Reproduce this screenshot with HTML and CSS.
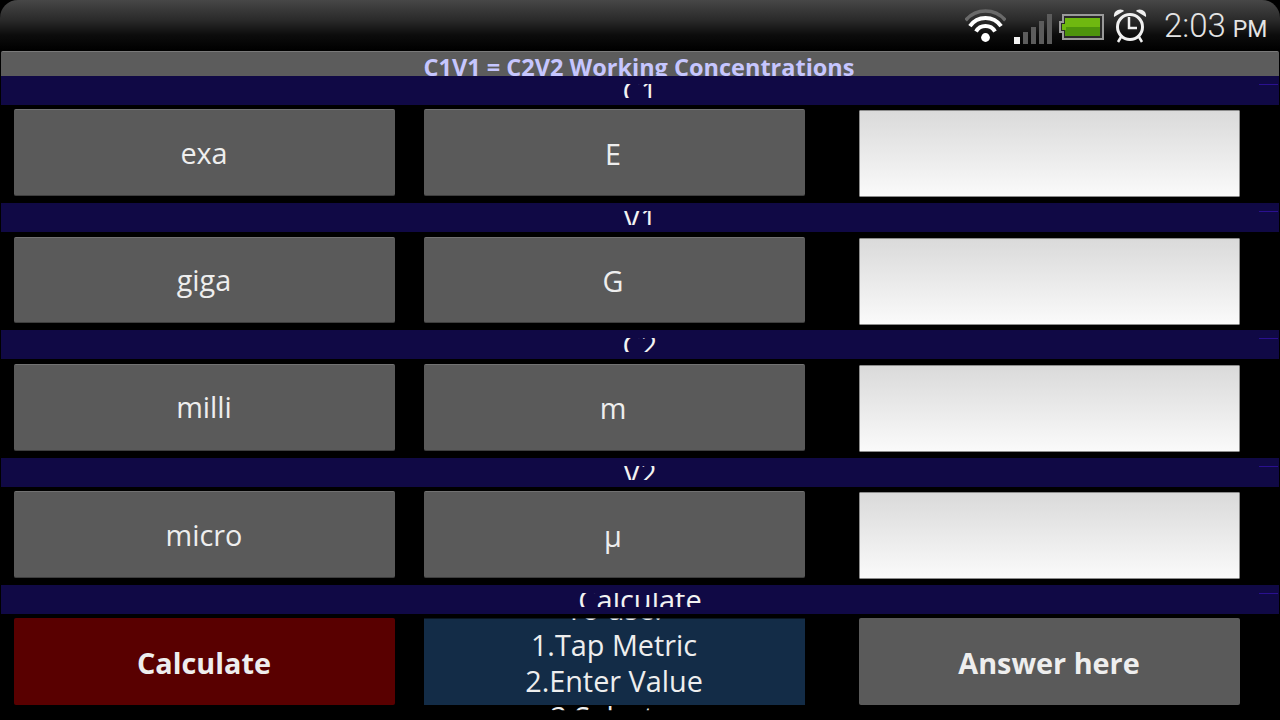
FILE: index.html
```html
<!DOCTYPE html>
<html lang="en">
<head>
<meta charset="utf-8">
<title>C1V1 = C2V2 Working Concentrations</title>
<link rel="stylesheet" href="styles.css">
</head>
<body>
<div class="screen">
  <header class="status">
    <svg class="ico wifi" viewBox="965 0 41 50" aria-hidden="true">
      <path class="arc dim" d="M965.6 20.3a26 26 0 0 1 39.8 0"/>
      <path class="arc" d="M969.9 26.1a19 19 0 0 1 31.2 0"/>
      <path class="arc" d="M976 31.5a11 11 0 0 1 19 0"/>
      <circle class="dot" cx="985.5" cy="37.5" r="4.4"/>
    </svg>
    <svg class="ico signal" viewBox="1014 0 38 50" aria-hidden="true">
      <rect class="on" x="1014" y="37" width="6" height="7"/>
      <rect class="off" x="1023" y="32" width="5" height="12"/>
      <rect class="off" x="1031" y="27" width="5" height="17"/>
      <rect class="off" x="1039" y="21" width="5" height="23"/>
      <rect class="off" x="1047" y="14" width="5" height="30"/>
    </svg>
    <svg class="ico battery" viewBox="1059 0 45 50" aria-hidden="true">
      <path class="shell" d="M1063 15h40v24h-40v-7h-3v-10h3z"/>
      <rect class="cell" x="1065" y="18" width="35" height="18"/>
      <rect class="cell-low" x="1065" y="27" width="35" height="9"/>
      <rect class="cell" x="1062" y="24" width="4" height="6"/>
    </svg>
    <svg class="ico alarm" viewBox="1113 0 34 50" aria-hidden="true">
      <circle class="ring" cx="1130" cy="27" r="12.5"/>
      <path class="hand" d="M1129 17v11h8"/>
      <path class="bell" d="M1114 17c-1-6 5-9 9-7l1 1z"/>
      <path class="bell" d="M1146 17c1-6-5-9-9-7l-1 1z"/>
      <path class="hand" d="M1121 37l-3 5M1139 37l3 5"/>
    </svg>
    <div class="clock">2:03<span class="ampm">PM</span></div>
  </header>

  <div class="title">C1V1 = C2V2 Working Concentrations</div>

  <section class="group">
    <div class="band"><div class="clip">C1</div></div>
    <div class="row">
      <button class="btn name">exa</button>
      <button class="btn sym">E</button>
      <input class="field" type="text" aria-label="C1">
    </div>
  </section>

  <section class="group">
    <div class="band"><div class="clip">V1</div></div>
    <div class="row">
      <button class="btn name">giga</button>
      <button class="btn sym">G</button>
      <input class="field" type="text" aria-label="V1">
    </div>
  </section>

  <section class="group">
    <div class="band"><div class="clip">C2</div></div>
    <div class="row">
      <button class="btn name">milli</button>
      <button class="btn sym">m</button>
      <input class="field" type="text" aria-label="C2">
    </div>
  </section>

  <section class="group">
    <div class="band"><div class="clip">V2</div></div>
    <div class="row">
      <button class="btn name">micro</button>
      <button class="btn sym">µ</button>
      <input class="field" type="text" aria-label="V2">
    </div>
  </section>

  <section class="group">
    <div class="band"><div class="clip">Calculate</div></div>
    <div class="row">
      <button class="btn strong danger">Calculate</button>
      <div class="help">
        <div class="help-text">
          <div>To use:</div>
          <div>1.Tap Metric</div>
          <div>2.Enter Value</div>
          <div>3.Select a</div>
        </div>
      </div>
      <button class="btn strong shifted">Answer here</button>
    </div>
  </section>
</div>
</body>
</html>
```
FILE: styles.css
```css
* { box-sizing: border-box; }
html, body { margin: 0; padding: 0; background: #000; }
.screen {
  width: 1280px;
  height: 720px;
  overflow: hidden;
  background: #000;
  font-family: "Open Sans", "Noto Sans", sans-serif;
  color: #eee;
}

/* status bar */
.status {
  height: 50px;
  display: flex;
  justify-content: flex-end;
  align-items: flex-start;
  padding-right: 13px;
  border-radius: 18px 18px 0 0;
  background: linear-gradient(#474747 0, #2a2a2a 40%, #0c0c0c 70%, #000 100%);
}
.ico { height: 50px; display: block; flex: none; }
.wifi { width: 41px; margin-right: 8px; }
.signal { width: 38px; margin-right: 7px; }
.battery { width: 45px; margin-right: 9px; }
.alarm { width: 34px; margin-right: 17px; }
.arc { fill: none; stroke: #fff; stroke-width: 4; }
.arc.dim { stroke: #6a6a6a; stroke-width: 3.5; }
.dot { fill: #fff; }
.on { fill: #f2f2f2; }
.off { fill: #5c5c5c; }
.shell { fill: #2a2a2a; stroke: #9a9a9a; stroke-width: 2; }
.cell { fill: #6fb810; }
.cell-low { fill: #4d940c; }
.ring { fill: none; stroke: #f0f0f0; stroke-width: 3; }
.hand { fill: none; stroke: #f0f0f0; stroke-width: 2.5; }
.bell { fill: #f0f0f0; }
.clock {
  width: 103px;
  padding-top: 6px;
  font-family: Roboto, sans-serif;
  font-weight: 300;
  font-size: 33px;
  line-height: 40px;
  color: #e4e4e4;
  white-space: nowrap;
}
.ampm { font-size: 23px; font-weight: 400; margin-left: 7px; }

.title {
  margin: 1px 1px 0;
  height: 24.9px;
  overflow: hidden;
  padding-right: 2px;
  background: #5c5c5c;
  border-top: 1px solid #7a7a7a;
  border-radius: 2px 2px 0 0;
  color: #c6c6ff;
  font-weight: 700;
  font-size: 23.5px;
  line-height: 30px;
  text-align: center;
}

.group { height: 127.25px; }

.band {
  position: relative;
  height: 29px;
  margin: 0 1px;
  padding-top: 8px;
  background: #100945;
}
.band::after {
  content: "";
  position: absolute;
  top: 8px;
  right: 1px;
  width: 19px;
  height: 1px;
  background: #2a1090;
}
.clip {
  height: 14px;
  overflow: hidden;
  text-align: center;
  font-size: 29px;
  line-height: 13.5px;
  color: #f2f2f2;
}

.row {
  display: flex;
  gap: 29px;
  height: 86.8px;
  margin-top: 4.5px;
  padding-left: 14px;
}
.btn {
  width: 381px;
  height: 100%;
  padding: 2px 1px 0 0;
  border: 0;
  border-top: 1px solid #727272;
  border-bottom: 1px solid #3e3e3e;
  border-radius: 2px;
  background: #5a5a5a;
  color: #eee;
  font: 400 28.8px/36px "Open Sans", "Noto Sans", sans-serif;
  text-align: center;
}
.name { padding-top: 0; }
.sym { padding-right: 3px; }
.strong { font-weight: 700; border: 0; }
.danger { background: #590000; }
.shifted { margin-left: 25px; }
.field {
  width: 381px;
  height: 87px;
  margin: 1px 0 0 25px;
  padding: 0;
  border: 1px solid #8c8c8c;
  border-radius: 1px;
  background: linear-gradient(#dadada, #fafafa);
}
.help {
  width: 381px;
  display: flex;
  justify-content: center;
  align-items: center;
  padding: 2px 1px 0 0;
  background: #132c47;
  clip-path: inset(0 0 -5px 0);
}
.help-text {
  flex: none;
  font-size: 28.8px;
  line-height: 36px;
  text-align: center;
  white-space: nowrap;
}
```
